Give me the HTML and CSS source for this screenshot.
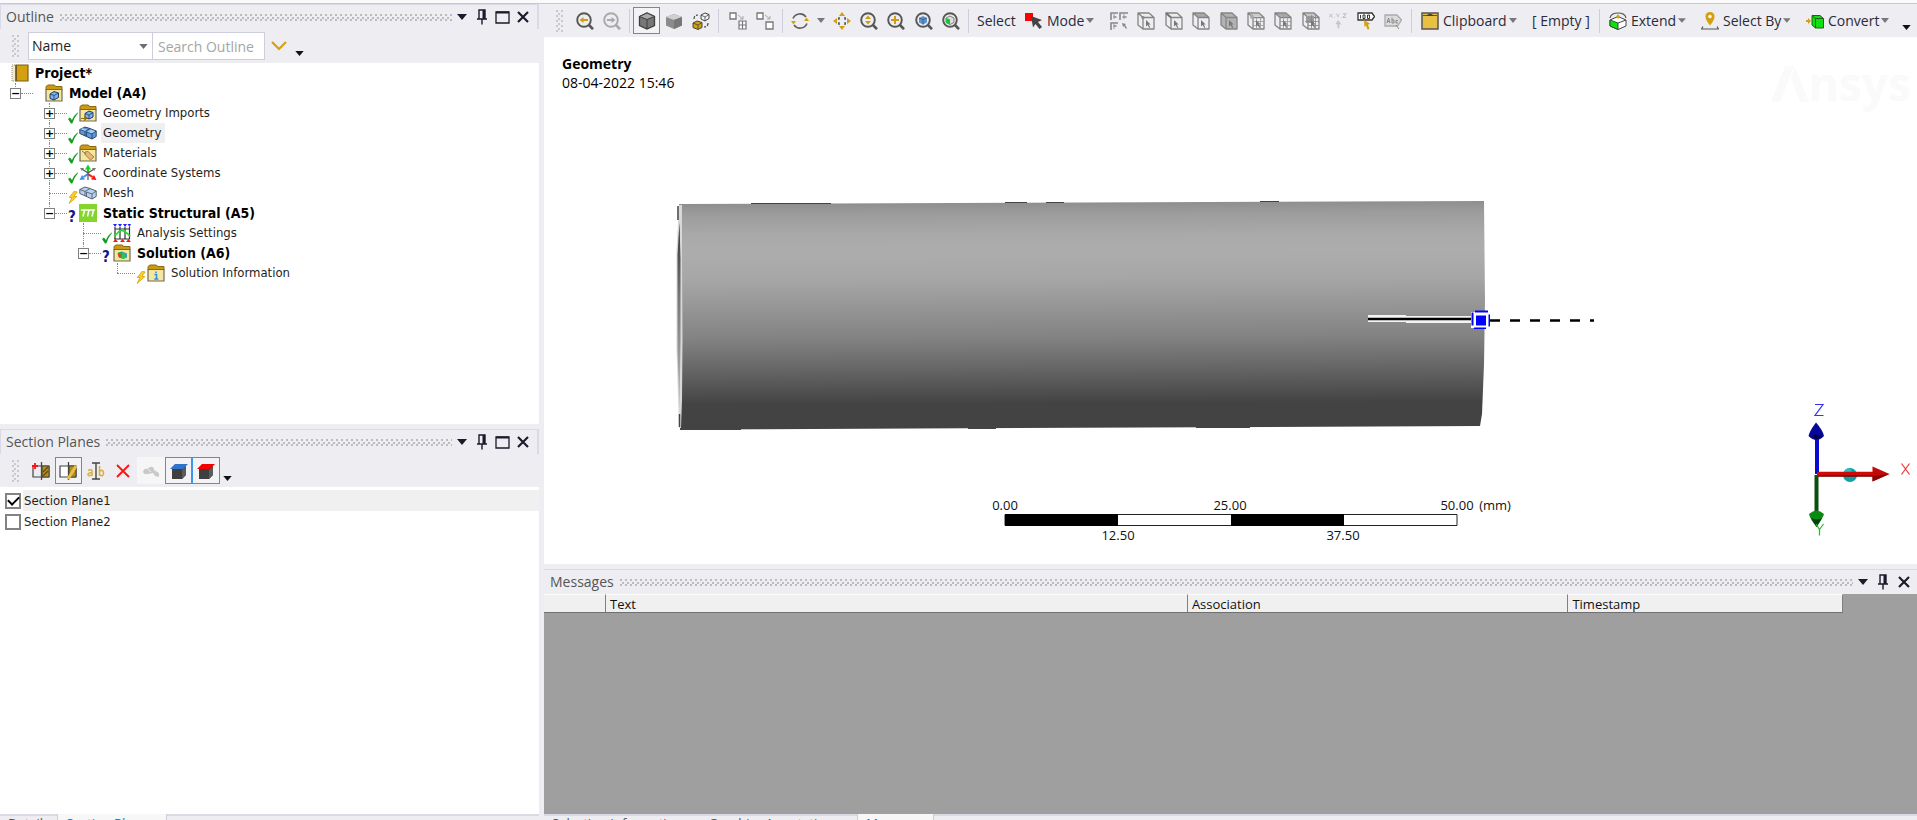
FILE: index.html
```html
<!DOCTYPE html>
<html lang="en">
<head>
<meta charset="utf-8">
<title>Mechanical - Geometry</title>
<link rel="stylesheet" href="styles.css">
</head>
<body>
<svg class="sprite" aria-hidden="true">
  <defs>
    <symbol id="i-caret" viewBox="0 0 10 6"><path d="M0 0h10L5 6z" fill="currentColor"/></symbol>
    <symbol id="i-pin" viewBox="0 0 10 16"><path d="M2 1h6v9H2zM0 10h10M5 10v5.500" fill="none" stroke="currentColor" stroke-width="1.400"/><path d="M5.500 1H8v9H5.500z" fill="currentColor"/></symbol>
    <symbol id="i-max" viewBox="0 0 15 13"><path d="M1 1h13v11H1z" fill="none" stroke="currentColor" stroke-width="1.300"/><path d="M1 1.500h13" stroke="currentColor" stroke-width="2"/></symbol>
    <symbol id="i-close" viewBox="0 0 12 12"><path d="M1 1l10 10M11 1L1 11" stroke="currentColor" stroke-width="2.200"/></symbol>
    <symbol id="i-check" viewBox="0 0 10 12"><path d="M0 7.500L2 6l2 2.500Q6 3.500 9.500 1l.5.5Q6.500 5.500 4.300 12H3z" fill="#12a01c"/></symbol>
    <symbol id="i-bolt" viewBox="0 0 10 14"><path d="M6 .5L1 7h3L.800 13.500 9.200 6H5.800L9.500 1z" fill="#ffd21f" stroke="#d09a10" stroke-width=".8"/></symbol>
    <symbol id="i-folder" viewBox="0 0 18 18"><path d="M1 4.500V2.500L3 1h6l2 1.500h6v3H1z" fill="#cc9a10" stroke="#8a6a14" stroke-width="1"/><path d="M1 5.500h16V17H1z" fill="#f6e7a0" stroke="#6f6a55" stroke-width="1.200"/></symbol>
    <symbol id="i-project" viewBox="0 0 18 18"><path d="M5 1h12v16H5z" fill="#d3a010" stroke="#7b6118" stroke-width="1.200"/><path d="M1 1h4v16H1z" fill="#f3ead0" stroke="#9a917a" stroke-dasharray="1 1"/><path d="M5 1v16" stroke="#5d4c1a" stroke-width="1.500"/></symbol>
    <symbol id="i-model" viewBox="0 0 18 18"><use href="#i-folder"/><path d="M5 10l4-2.500 4.500 1.500v4.500L9 16l-4-1.500z" fill="#7fb0ea" stroke="#1d3e68"/><path d="M5 10l4 1.500 4.500-2.500M9 11.500V16" fill="none" stroke="#1d3e68" stroke-width=".8"/></symbol>
    <symbol id="i-imports" viewBox="0 0 18 18"><use href="#i-folder"/><path d="M6 9.500L10 7l4 1.500V13l-4 2-4-1.500z" fill="#7fb0ea" stroke="#1d3e68"/><path d="M6 9.500l4 1.500 4-2.500M10 11v4" fill="none" stroke="#1d3e68" stroke-width=".8"/><path d="M2 14.500h5M5 12.500l2.500 2L5 16.500" fill="none" stroke="#9a6b00" stroke-width="1.200"/></symbol>
    <symbol id="i-geometry" viewBox="0 0 18 18"><path d="M.8 5.500L6 3l5 1.500L17.200 7v5.500L13 15 .8 9.500z" fill="#5b9be0" stroke="#2b4466"/><path d="M.8 5.500L6 8l2.500-2.200L3.500 4.200zM8 8l4.500 2L17 7.500 12 5.500z" fill="#a9cbf0"/><path d="M.8 5.500L6 7.500 11 4.500M6 7.500v4.200M7.500 8l5.500 2 4.200-3M13 10v5M7.500 8v4.500" fill="none" stroke="#2b4466" stroke-width=".9"/></symbol>
    <symbol id="i-mesh" viewBox="0 0 18 18"><path d="M.8 5.500L6 3l5 1.500L17.200 7v5.500L13 15 .8 9.500z" fill="#b8d2f0" stroke="#56616e"/><path d="M.8 5.500L6 7.500 11 4.500M6 7.500v4.200M7.500 8l5.500 2 4.200-3M13 10v5M7.500 8v4.500" fill="none" stroke="#56616e" stroke-width=".9"/></symbol>
    <symbol id="i-materials" viewBox="0 0 18 18"><use href="#i-folder"/><path d="M6 8l3-.5 6 5.500-3.500 3L6 10.500z" fill="#e9b878" stroke="#a37432" stroke-width=".9"/><path d="M3 7l4 3" stroke="#777"/></symbol>
    <symbol id="i-coords" viewBox="0 0 18 18"><path d="M9 9V4" stroke="#17d020" stroke-width="2"/><path d="M6 5.500L9 .5l3 5z" fill="#17d020"/><path d="M9 10l4.500 3" stroke="#f11" stroke-width="2"/><path d="M12 15.500l5.500.5-2.500-5z" fill="#f11"/><path d="M9 10l-4.500 3" stroke="#3f8df0" stroke-width="2"/><path d="M6 15.500L.5 16 3 11z" fill="#3f8df0"/><path d="M9 9L3 5M9 9l6-4M9 9v7" stroke="#555" stroke-width="1.200"/><path d="M1 4l4 0-2 3zM17 4h-4l2 3z" fill="#777"/></symbol>
    <symbol id="i-static" viewBox="0 0 18 18"><path d="M0 0h18v18H0z" fill="#84d52c"/><path d="M2 6h14M5.500 6L4 12.500M10 6l-1.500 6.500M14.500 6L13 12.500" stroke="#fff" stroke-width="1.500"/></symbol>
    <symbol id="i-analysis" viewBox="0 0 18 18"><path d="M2 3v12M7 3v12M12 3v12M16.500 3v12M2 5h15M1 15h16" stroke="#333" stroke-width="1.200"/><path d="M1 12q2-1 4-3.500T9 6.500t4 2 4 3.500" fill="none" stroke="#20df30" stroke-width="1.800"/><path d="M0 0h4L2 3zM5 0h4L7 3zM10 0h4l-2 3zM14.500 0H18l-1.500 3z" fill="#22f"/><path d="M0 18h5l-2.500-3zM7 18h5l-2.500-3zM13 18h5l-2.500-3z" fill="#f11"/></symbol>
    <symbol id="i-solution" viewBox="0 0 18 18"><use href="#i-folder"/><path d="M5 8.500l4-1v7l-3-1z" fill="#18b63c"/><path d="M4.500 9l3 1v4l-2-1z" fill="#e33a20"/><path d="M9 7.500l5 2v4l-5 1.500z" fill="#2f9bd8"/><path d="M9 8.500l3 2v4l-3 .5z" fill="#36c63c"/></symbol>
    <symbol id="i-solinfo" viewBox="0 0 18 18"><use href="#i-folder"/><path d="M9 7.500v1.500M7.500 10.500H9.500V15M7.300 15h4" fill="none" stroke="#2f8ae0" stroke-width="1.500"/></symbol>

    <symbol id="i-lens" viewBox="0 0 18 18"><circle cx="8" cy="8" r="6.800" fill="none" stroke="currentColor" stroke-width="1.900"/><path d="M12.500 12.500L17 17.200" stroke="currentColor" stroke-width="2.600"/></symbol>
    <symbol id="i-zback" viewBox="0 0 18 18"><use href="#i-lens"/><path d="M3.500 8L7.500 5v2H12v2H7.500v2z" fill="#cf9d12"/></symbol>
    <symbol id="i-zfwd" viewBox="0 0 18 18"><use href="#i-lens"/><path d="M12.500 8L8.500 5v2H4v2h4.500v2z" fill="currentColor"/></symbol>
    <symbol id="i-zoom" viewBox="0 0 18 18"><use href="#i-lens"/><path d="M8 3.500l3 3.500H5zM8 12.500l3-3.500H5z" fill="#cf9d12"/></symbol>
    <symbol id="i-zbox" viewBox="0 0 18 18"><use href="#i-lens"/><path d="M7 4h2v3h3v2H9v3H7V9H4V7h3z" fill="#cf9d12"/></symbol>
    <symbol id="i-zfit" viewBox="0 0 18 18"><use href="#i-lens"/><path d="M4 6l4-2 4 2v4.500L8 12.500l-4-2z" fill="#5f93cf"/><path d="M4 6l4 1.500L12 6M8 7.500v5" fill="none" stroke="#2f4d73" stroke-width=".7"/></symbol>
    <symbol id="i-zsel" viewBox="0 0 18 18"><use href="#i-lens"/><path d="M4 6l4-2 4 2v4.500L8 12.500l-4-2z" fill="#ddd" stroke="#555" stroke-width=".7"/><path d="M4 6l4 1.500v5l-4-2z" fill="#17c832"/></symbol>
    <symbol id="i-cubeedge" viewBox="0 0 18 18"><path d="M1.500 4.500L9 1l7.500 3.500v9L9 17l-7.500-3.500z" fill="#777" stroke="#3f3f3f" stroke-width="1.300"/><path d="M1.500 4.500L9 1l7.500 3.500L9 7.500z" fill="#aaa" stroke="#3f3f3f"/><path d="M9 7.500V17" stroke="#3f3f3f"/></symbol>
    <symbol id="i-cube" viewBox="0 0 18 18"><path d="M1 5l8-3 8 3v8.500L9 17l-8-3.500z" fill="#8b8b8b"/><path d="M1 5l8-3 8 3-8 3z" fill="#cfcfcf"/><path d="M9 8l8-3v8.500L9 17z" fill="#777"/></symbol>
    <symbol id="i-swap" viewBox="0 0 18 18"><path d="M9 3l4-2 4 1.500v4L13 9 9 7z" fill="#f4f4f4" stroke="#444"/><path d="M9 3l4 2 4-2.500M13 5v4" fill="none" stroke="#444" stroke-width=".8"/><path d="M1 11l4-2 5 1.500v5L6 17.500l-5-2z" fill="#d3a010" stroke="#444"/><path d="M1 11l5 2 4-2.500M6 13v4" fill="none" stroke="#444" stroke-width=".8"/><path d="M2 7q0-4 4-4M16 11q0 4-4 4" fill="none" stroke="#444" stroke-width="1.200" stroke-dasharray="3 1.500"/></symbol>
    <symbol id="i-expand1" viewBox="0 0 18 18"><path d="M1 1h6v6H1z" fill="#fff" stroke="#777" stroke-width="1.300"/><path d="M10 9h7v8h-7zM13.500 9v8M10 13h7" fill="#fff" stroke="#777" stroke-width="1.200"/><path d="M9 3l5 4M14 4v3h-3" fill="none" stroke="#aaa"/></symbol>
    <symbol id="i-expand2" viewBox="0 0 18 18"><path d="M1 1h6v6H1z" fill="#fff" stroke="#777" stroke-width="1.300"/><path d="M10 10h7v7h-7z" fill="#fff" stroke="#777" stroke-width="1.300"/><path d="M9 3l5 4M14 4v3h-3" fill="none" stroke="#aaa"/></symbol>
    <symbol id="i-rotate" viewBox="0 0 18 18"><path d="M2 6.500a7.500 7.500 0 0 1 13-1.500M16 11.500A7.500 7.500 0 0 1 3 13" fill="none" stroke="#606060" stroke-width="1.600"/><path d="M0 9l5 0-2.500 3.500zM18 9h-5l2.500-3.500z" fill="#d3a010"/></symbol>
    <symbol id="i-pan" viewBox="0 0 18 18"><path d="M9 0l3 4H6zM9 18l3-4H6zM0 9l4-3v6zM18 9l-4-3v6z" fill="#d3a010"/><path d="M6 5v2H5M12 5v2h1M6 13v-2H5M12 13v-2h1" fill="none" stroke="#555" stroke-width="1.500"/></symbol>
    <symbol id="i-selmode" viewBox="0 0 18 18"><path d="M0 1h8v8H0z" fill="#fe0000"/><path d="M6 4l11 4-4 2 4 5-2.500 2-4-5-2.500 3.500z" fill="#454545"/></symbol>
    <symbol id="i-arrow" viewBox="0 0 18 18"><path d="M9 8v6.500l1.600-1.500 1.700 3 1-.7-1.700-2.700h2.100z" fill="#777"/></symbol>
    <symbol id="i-filter" viewBox="0 0 18 18"><path d="M1 8V1h7M3.500 5h3M10 8V1h8M12.500 5h4M1 18v-7h7M3.500 14h3" fill="none" stroke="#888" stroke-width="1.600"/><path d="M4 2v5M14 2v5M4 12v5" stroke="#999"/><path d="M12 11l4 1-1 1 2 3-1 1-2-3-1 1z" fill="#888"/></symbol>
    <symbol id="i-box" viewBox="0 0 18 18"><path d="M1 1h11l5 4.500V17H6l-5-4zM6 5.500h11M6 5.500V17M1 1l5 4.500" fill="none" stroke="#858585" stroke-width="1.300" stroke-linejoin="round"/></symbol>
    <symbol id="i-vertex" viewBox="0 0 18 18"><use href="#i-box"/><use href="#i-arrow"/><circle cx="6" cy="5.500" r="1.600" fill="#888"/></symbol>
    <symbol id="i-edge" viewBox="0 0 18 18"><use href="#i-box"/><use href="#i-arrow"/><path d="M1 1l5 4.500" stroke="#777" stroke-width="2"/></symbol>
    <symbol id="i-face" viewBox="0 0 18 18"><path d="M1 1h11l5 4.500H6z" fill="#a9a9a9"/><use href="#i-box"/><use href="#i-arrow"/></symbol>
    <symbol id="i-body" viewBox="0 0 18 18"><path d="M1 1h11l5 4.500V17H6l-5-4z" fill="#b2b2b2"/><use href="#i-box"/><use href="#i-arrow"/></symbol>
    <symbol id="i-node" viewBox="0 0 18 18"><use href="#i-box"/><path d="M9.500 5.500V17M13.500 5.500V17M6 9.500h11M6 13.500h11M5 1v4M3.500 3h11" stroke="#999" stroke-width=".8"/><circle cx="5" cy="5" r="2" fill="#aaa"/><use href="#i-arrow"/></symbol>
    <symbol id="i-elface" viewBox="0 0 18 18"><path d="M1 1h11l5 4.500H6z" fill="#b5b5b5"/><use href="#i-box"/><path d="M9.500 1v16M13.500 3v14M6 9.500h11M6 13.500h11M3.500 3h11" stroke="#999" stroke-width=".8"/><use href="#i-arrow"/></symbol>
    <symbol id="i-element" viewBox="0 0 18 18"><use href="#i-box"/><path d="M4 4h8v7H4z" fill="#999"/><path d="M9.500 3v14M13.500 3v14M3 9.500h14M6 13.500h11M3.500 3h11" stroke="#888" stroke-width=".8"/><use href="#i-arrow"/></symbol>
    <symbol id="i-xyz" viewBox="0 0 20 18"><path d="M0 1l4 4M4 1L0 5M8 1l2 2 2-2M10 3v2M15.500 1H19l-3.500 4H19M6 5h.5M13.500 5h.5" fill="none" stroke="#b4b4b8"/><path d="M10 8l4 5-2.500-.5V17h-2v-4.500L7 13z" fill="#c6c6ca"/></symbol>
    <symbol id="i-probe" viewBox="0 0 18 18"><path d="M1 1h14l2.500 3.500L15 8H1z" fill="#fff" stroke="#333" stroke-width="1.300"/><path d="M3.500 3v3.500M6 3h2v3.500H6zM10.500 3h2v3.500h-2z" fill="none" stroke="#333"/><path d="M7 8l6.500 4-2.500.5 1.500 4.500-2 .5-1.500-4-1.500 1.500z" fill="#d3a010"/></symbol>
    <symbol id="i-abc" viewBox="0 0 18 18"><path d="M1 3h12l4.500 5-4 6H1z" fill="#dcdcdc" stroke="#aaa" stroke-width="1.300"/><path d="M3 11l1.500-5L6 11M3.500 9.500h2M8 5.500V11h2V8H8M14 8.500h-2V11h2M12 13l3 4" fill="none" stroke="#888"/></symbol>
    <symbol id="i-clip" viewBox="0 0 18 18"><path d="M1 1h16v16H1z" fill="#e8c044" stroke="#555" stroke-width="1.500"/><path d="M2 3.500h14" stroke="#555"/><path d="M5 4q4-5 8 0z" fill="#444"/></symbol>
    <symbol id="i-extend" viewBox="0 0 18 18"><path d="M1 8l8-3.500L17 8v6l-8 3.500L1 14z" fill="#fff" stroke="#444"/><path d="M1 8l8 3v6.500L1 14z" fill="#10e010" stroke="#2a5a2a"/><path d="M9 11l8-3" stroke="#444"/><path d="M1 6Q2 1 9 1t8 5" fill="none" stroke="#555" stroke-width="1.200"/><path d="M9 2l1.800 2.500L9 7 7.200 4.500z" fill="#d3a010"/></symbol>
    <symbol id="i-selby" viewBox="0 0 18 18"><path d="M9 0q4.500 0 4.500 4.500Q13.500 8 9 13.500 4.500 8 4.500 4.500 4.500 0 9 0z" fill="#d3a010"/><circle cx="9" cy="4.500" r="1.700" fill="#fff"/><path d="M2 14.500L.5 17h17L16 14.500" fill="none" stroke="#555" stroke-width="1.200"/></symbol>
    <symbol id="i-convert" viewBox="0 0 18 18"><path d="M6 3.500h8l3.500 3V16H9.500L6 13z" fill="#10e010" stroke="#245a24"/><path d="M6 3.500l3.500 3H17.500M9.500 6.500V16" fill="none" stroke="#245a24"/><path d="M0 8h2V6l3 3-3 3v-2H0z" fill="#d3a010"/></symbol>

    <symbol id="i-newplane" viewBox="0 0 18 18"><path d="M1 4h16v11H1z" fill="#ececf0" stroke="#444" stroke-width="1.200"/><path d="M10 4h7v11h-7z" fill="#b88d14" stroke="#444"/><path d="M11 10l5-5M11 14l5-5" stroke="#5d4a12" stroke-width="1.300"/><path d="M9.500 0v18" stroke="#444" stroke-width="1.300"/><path d="M3 1v6M0 4h6" stroke="#f11" stroke-width="1.800"/></symbol>
    <symbol id="i-editplane" viewBox="0 0 18 18"><path d="M1 4h16v11H1z" fill="#fff" stroke="#444" stroke-width="1.200"/><path d="M10 4h7v11h-7z" fill="#b88d14" stroke="#444"/><path d="M9.500 0v18" stroke="#444" stroke-width="1.300"/><path d="M17 4l-8 13" stroke="#e8c044" stroke-width="3"/></symbol>
    <symbol id="i-rename" viewBox="0 0 18 18"><path d="M1 8.500q4-2 4 1V14M5 11q-4-.5-4 1.500t4 .5M12.500 4v10M12.500 9q4-2 4 2t-4 2" fill="none" stroke="#dcb040" stroke-width="1.600"/><path d="M5 1h8M5 17h8M9 1v16" stroke="#444" stroke-width="1.400"/></symbol>
    <symbol id="i-delete" viewBox="0 0 18 18"><path d="M3 3l12 12M15 3L3 15" stroke="#fb1515" stroke-width="1.900"/></symbol>
    <symbol id="i-ghost" viewBox="0 0 18 18"><path d="M1 10q1-4 4-3l3-2q4-1 4 3l5 3v4l-4-1-2-3-5 1q-4 1-5-2z" fill="#c9c9c9"/><path d="M6 7l3 3" stroke="#eee"/></symbol>
    <symbol id="i-capblue" viewBox="0 0 18 18"><path d="M2 6h10l4-2v9l-4 4H2z" fill="#3f3f3f"/><path d="M12 8l4-3v8l-4 4z" fill="#5c5c5c"/><path d="M5 2h13l-5 5H0z" fill="#2f74cc"/></symbol>
    <symbol id="i-capred" viewBox="0 0 18 18"><path d="M2 6h10l4-2v9l-4 4H2z" fill="#3f3f3f"/><path d="M12 8l4-3v8l-4 4z" fill="#5c5c5c"/><path d="M5 2h13l-5 5H0z" fill="#f60000"/></symbol>
  </defs>
</svg>

<div class="app">
  <div class="column side">
    <section class="panel outline">
      <header class="panel-head framed">
        <h2>Outline</h2><span class="dots"></span>
        <button aria-label="Menu"><svg class="w10"><use href="#i-caret"/></svg></button>
        <button aria-label="Pin"><svg class="w10 tall"><use href="#i-pin"/></svg></button>
        <button aria-label="Maximize"><svg class="w15"><use href="#i-max"/></svg></button>
        <button aria-label="Close"><svg class="w12"><use href="#i-close"/></svg></button>
      </header>
      <div class="search-bar">
        <span class="grip"></span>
        <span class="select-wrap"><select aria-label="Search by"><option>Name</option></select><svg><use href="#i-caret"/></svg></span>
        <input type="text" aria-label="Search Outline" placeholder="Search Outline">
        <button class="chevron" aria-label="Expand"><svg viewBox="0 0 16 10"><path d="M1 1l7 7 7-7" fill="none" stroke="#d3a010" stroke-width="2.200"/></svg></button>
        <button class="more" aria-label="More"><svg><use href="#i-caret"/></svg></button>
      </div>
      <div class="panel-body">
        <ul class="tree">
          <li>
            <div class="row strong"><svg class="icon"><use href="#i-project"/></svg><span class="label">Project*</span></div>
            <ul>
              <li>
                <div class="row strong"><span class="twig"><button class="toggle" aria-label="Collapse">−</button></span><svg class="icon"><use href="#i-model"/></svg><span class="label">Model (A4)</span></div>
                <ul>
                  <li><div class="row"><span class="twig"><button class="toggle" aria-label="Expand">+</button><svg class="mark"><use href="#i-check"/></svg></span><svg class="icon"><use href="#i-imports"/></svg><span class="label">Geometry Imports</span></div></li>
                  <li><div class="row"><span class="twig"><button class="toggle" aria-label="Expand">+</button><svg class="mark"><use href="#i-check"/></svg></span><svg class="icon"><use href="#i-geometry"/></svg><span class="label current">Geometry</span></div></li>
                  <li><div class="row"><span class="twig"><button class="toggle" aria-label="Expand">+</button><svg class="mark"><use href="#i-check"/></svg></span><svg class="icon"><use href="#i-materials"/></svg><span class="label">Materials</span></div></li>
                  <li><div class="row"><span class="twig"><button class="toggle" aria-label="Expand">+</button><svg class="mark"><use href="#i-check"/></svg></span><svg class="icon"><use href="#i-coords"/></svg><span class="label">Coordinate Systems</span></div></li>
                  <li><div class="row"><span class="twig leaf"><svg class="mark"><use href="#i-bolt"/></svg></span><svg class="icon"><use href="#i-mesh"/></svg><span class="label">Mesh</span></div></li>
                  <li>
                    <div class="row strong"><span class="twig"><button class="toggle" aria-label="Collapse">−</button><b class="mark">?</b></span><svg class="icon"><use href="#i-static"/></svg><span class="label">Static Structural (A5)</span></div>
                    <ul>
                      <li><div class="row"><span class="twig leaf"><svg class="mark"><use href="#i-check"/></svg></span><svg class="icon"><use href="#i-analysis"/></svg><span class="label">Analysis Settings</span></div></li>
                      <li>
                        <div class="row strong"><span class="twig"><button class="toggle" aria-label="Collapse">−</button><b class="mark">?</b></span><svg class="icon"><use href="#i-solution"/></svg><span class="label">Solution (A6)</span></div>
                        <ul>
                          <li><div class="row"><span class="twig leaf"><svg class="mark"><use href="#i-bolt"/></svg></span><svg class="icon"><use href="#i-solinfo"/></svg><span class="label">Solution Information</span></div></li>
                        </ul>
                      </li>
                    </ul>
                  </li>
                </ul>
              </li>
            </ul>
          </li>
        </ul>
      </div>
    </section>

    <section class="panel planes">
      <header class="panel-head framed">
        <h2>Section Planes</h2><span class="dots"></span>
        <button aria-label="Menu"><svg class="w10"><use href="#i-caret"/></svg></button>
        <button aria-label="Pin"><svg class="w10 tall"><use href="#i-pin"/></svg></button>
        <button aria-label="Maximize"><svg class="w15"><use href="#i-max"/></svg></button>
        <button aria-label="Close"><svg class="w12"><use href="#i-close"/></svg></button>
      </header>
      <div class="plane-bar">
        <span class="grip"></span>
        <div class="tools">
          <button aria-label="New section plane"><svg><use href="#i-newplane"/></svg></button>
          <button class="on" aria-label="Edit section plane"><svg><use href="#i-editplane"/></svg></button>
          <button aria-label="Rename"><svg><use href="#i-rename"/></svg></button>
          <button aria-label="Delete"><svg><use href="#i-delete"/></svg></button>
          <button class="pale" aria-label="Show whole elements"><svg><use href="#i-ghost"/></svg></button>
          <button class="on" aria-label="Show capping faces"><svg><use href="#i-capblue"/></svg></button>
          <button class="on" aria-label="Show capping by body"><svg><use href="#i-capred"/></svg></button>
        </div>
        <button class="more" aria-label="More"><svg><use href="#i-caret"/></svg></button>
      </div>
      <div class="panel-body plane-list">
        <label class="plane"><input type="checkbox" checked><span class="active">Section Plane1</span></label>
        <label class="plane"><input type="checkbox"><span>Section Plane2</span></label>
      </div>
      <nav class="tabs">
        <button>Details</button>
        <button class="active">Section Planes</button>
      </nav>
    </section>
  </div>

  <main class="column work">
    <div class="toolbar">
      <span class="grip"></span>
      <div class="tools two">
        <button aria-label="Previous view"><svg><use href="#i-zback"/></svg></button>
        <button class="dim" aria-label="Next view"><svg><use href="#i-zfwd"/></svg></button>
      </div>
      <span class="rule"></span>
      <div class="tools three">
        <button class="on" aria-label="Shaded exterior and edges"><svg><use href="#i-cubeedge"/></svg></button>
        <button aria-label="Shaded exterior"><svg><use href="#i-cube"/></svg></button>
        <button aria-label="Swap display"><svg><use href="#i-swap"/></svg></button>
      </div>
      <span class="rule"></span>
      <div class="tools two">
        <button aria-label="Expand parts"><svg><use href="#i-expand1"/></svg></button>
        <button aria-label="Collapse parts"><svg><use href="#i-expand2"/></svg></button>
      </div>
      <span class="rule"></span>
      <button class="spin" aria-label="Rotate"><svg class="glyph"><use href="#i-rotate"/></svg><svg class="caret"><use href="#i-caret"/></svg></button>
      <div class="tools five">
        <button aria-label="Pan"><svg><use href="#i-pan"/></svg></button>
        <button aria-label="Zoom"><svg><use href="#i-zoom"/></svg></button>
        <button aria-label="Box zoom"><svg><use href="#i-zbox"/></svg></button>
        <button aria-label="Zoom to fit"><svg><use href="#i-zfit"/></svg></button>
        <button aria-label="Zoom to selection"><svg><use href="#i-zsel"/></svg></button>
      </div>
      <span class="rule"></span>
      <span class="caption">Select</span>
      <button class="menu mode"><svg class="glyph"><use href="#i-selmode"/></svg>Mode<svg class="caret"><use href="#i-caret"/></svg></button>
      <div class="tools eleven">
        <button aria-label="Selection filter"><svg><use href="#i-filter"/></svg></button>
        <button aria-label="Vertex"><svg><use href="#i-vertex"/></svg></button>
        <button aria-label="Edge"><svg><use href="#i-edge"/></svg></button>
        <button aria-label="Face"><svg><use href="#i-face"/></svg></button>
        <button aria-label="Body"><svg><use href="#i-body"/></svg></button>
        <button aria-label="Node"><svg><use href="#i-node"/></svg></button>
        <button aria-label="Element face"><svg><use href="#i-elface"/></svg></button>
        <button aria-label="Element"><svg><use href="#i-element"/></svg></button>
        <button aria-label="Coordinates"><svg><use href="#i-xyz"/></svg></button>
        <button aria-label="Probe"><svg><use href="#i-probe"/></svg></button>
        <button aria-label="Label"><svg><use href="#i-abc"/></svg></button>
      </div>
      <span class="rule"></span>
      <button class="menu clip"><svg class="glyph"><use href="#i-clip"/></svg>Clipboard<svg class="caret"><use href="#i-caret"/></svg></button>
      <span class="empty">[ Empty ]</span>
      <span class="rule"></span>
      <button class="menu extend"><svg class="glyph"><use href="#i-extend"/></svg>Extend<svg class="caret"><use href="#i-caret"/></svg></button>
      <button class="menu selby"><svg class="glyph"><use href="#i-selby"/></svg>Select By<svg class="caret"><use href="#i-caret"/></svg></button>
      <button class="menu convert"><svg class="glyph"><use href="#i-convert"/></svg>Convert<svg class="caret"><use href="#i-caret"/></svg></button>
      <button class="more" aria-label="More"><svg><use href="#i-caret"/></svg></button>
    </div>

    <div class="viewport">
      <svg class="scene" viewBox="544 37 1373 527" role="img" aria-label="Cylinder with section plane">
        <defs>
          <linearGradient id="steel" gradientUnits="userSpaceOnUse" x1="1080" y1="202" x2="1081" y2="428">
            <stop offset="0" stop-color="#8e8e8e"/><stop offset=".05" stop-color="#9c9c9c"/><stop offset=".14" stop-color="#a9a9a9"/><stop offset=".22" stop-color="#adadad"/><stop offset=".34" stop-color="#a6a6a6"/><stop offset=".46" stop-color="#969696"/><stop offset=".6" stop-color="#828282"/><stop offset=".72" stop-color="#696969"/><stop offset=".82" stop-color="#535353"/><stop offset=".89" stop-color="#434343"/><stop offset="1" stop-color="#434343"/>
          </linearGradient>
          <linearGradient id="rim" x1="0" y1="0" x2="0" y2="1"><stop offset="0" stop-color="#333"/><stop offset=".4" stop-color="#777"/><stop offset="1" stop-color="#bbb"/></linearGradient>
        </defs>
        <path d="M679 204L1484 201L1485 300L1484 364L1482 414L1480 426L680 429.500L677 320z" fill="url(#steel)"/>
        <path d="M679 205L682 205L682 260L682.500 340L682 400L681 428L679 428L676.500 350L676.500 250z" fill="#d8d8d8"/>
        <path d="M679.500 222L680.500 260V340L679.500 410L677.500 350V255z" fill="url(#rim)"/>
        <path d="M678 206v14M679.500 414v13" stroke="#444" stroke-width="1.500"/>
        <path d="M751 203.500h80M1005 202.500h22M1046 202.500h18M1260 201.500h19M680 429.500h61M968 428.500h28M1196 427.500h54" stroke="#444"/>
        <path d="M1368 315h38v1h66v7h-66v-1h-38z" fill="#f4f4f4"/>
        <path d="M1368 319h104" stroke="#000" stroke-width="2.500"/>
        <path d="M1490 320.500h10M1510 320.500h10M1530 320.500h10M1550 320.500h10M1570 320.500h10M1590 320.500h4" stroke="#000" stroke-width="2.500"/>
        <path d="M1471 312h18v16h-18z" fill="#fff"/>
        <path d="M1475 310.500h13v2h-13zM1474 327.500h12v1.500h-12zM1471.500 312.500h2v13h-2zM1488.500 314.500h1.500v12h-1.500zM1476 315.500h10v10h-10z" fill="#00f"/>

        <path d="M1005 514.500h452v11h-452z" fill="#fff" stroke="#222"/>
        <path d="M1005 514h113v12h-113zM1231 514h113v12h-113z"/>
        <g class="scale-text">
          <text x="1005" y="510">0.00</text><text x="1230" y="510">25.00</text><text x="1457" y="510">50.00</text><text x="1495" y="510">(mm)</text>
          <text x="1118" y="540">12.50</text><text x="1343" y="540">37.50</text>
        </g>

        <circle cx="1850" cy="475" r="7" fill="#12a0a4"/><circle cx="1848" cy="472" r="3.500" fill="#25c4c4"/>
        <path d="M1816.500 475v42" stroke="#0b4f10" stroke-width="4"/><path d="M1809 514q7.500-7 15 0-1 4-7.500 13-6.500-8-7.500-13z" fill="#0a8a10"/><path d="M1811 518q6 3 11 0l-5.500 9z" fill="#083f0c"/>
        <path d="M1817 474v-42" stroke="#0a0ad0" stroke-width="4"/><path d="M1808.500 436q1-5 7.500-13.500 7 8 8 13.500-7.500 8-15.500 0z" fill="#06069a"/><path d="M1812 437q4-5 9 0-4 4-9 0z" fill="#020240"/>
        <path d="M1817 474h56" stroke="#cc0a0a" stroke-width="4.500"/><path d="M1818 476h55" stroke="#7a0505" stroke-width="1.500"/><path d="M1872.500 466.500v15l17-7.500z" fill="#c40808"/><path d="M1872.500 476v5.500l17-7.500z" fill="#8a0505"/>
        <path d="M1815 404.500h8l-8 11h8.500" fill="none" stroke="#3333f4" stroke-width="1.200"/>
        <path d="M1901.500 463.500l8 11M1909.500 463.500l-8 11" stroke="#f43333" stroke-width="1.200"/>
        <path d="M1816 524l3.500 5.500 4-5.500M1819.500 529.500v6" fill="none" stroke="#22b822" stroke-width="1.200"/>
      </svg>
      <div class="stamp"><h1>Geometry</h1><p>08-04-2022 15:46</p></div>
      <div class="watermark"><svg viewBox="0 0 38 36"><path d="M0 36L14 0h9L9 36zM24 1l14 35H29L20 12z" fill="currentColor"/></svg><span>nsys</span></div>
    </div>

    <section class="panel messages">
      <header class="panel-head">
        <h2>Messages</h2><span class="dots"></span>
        <button aria-label="Menu"><svg class="w10"><use href="#i-caret"/></svg></button>
        <button aria-label="Pin"><svg class="w10 tall"><use href="#i-pin"/></svg></button>
        <button aria-label="Close"><svg class="w12"><use href="#i-close"/></svg></button>
      </header>
      <div class="message-area">
        <table>
          <colgroup><col class="c-mark"><col class="c-text"><col class="c-assoc"><col></colgroup>
          <thead><tr><th></th><th>Text</th><th>Association</th><th>Timestamp</th></tr></thead>
        </table>
      </div>
      <nav class="tabs">
        <button>Selection Information</button>
        <button>Graphics Annotations</button>
        <button class="active">Messages</button>
      </nav>
    </section>
  </main>
</div>
</body>
</html>
```

FILE: styles.css
```css
* { box-sizing: border-box; }

body {
  margin: 0;
  height: 100vh;
  overflow: hidden;
  background: #eeeef2;
  color: #1e1e1e;
  font: 13px/20px "Open Sans", "Noto Sans", sans-serif;
}

h1, h2, p, ul { margin: 0; padding: 0; }
button, input, select { font: inherit; color: inherit; }
button {
  display: flex;
  align-items: center;
  justify-content: center;
  padding: 0;
  border: 0;
  background: none;
  white-space: nowrap;
}
.sprite { position: absolute; width: 0; height: 0; }

/* The tab strips run past the lower edge of the window. */
.app {
  display: grid;
  grid-template-columns: 539fr 1373fr;
  column-gap: 5px;
  height: calc(100vh + 18px);
  border-top: 3px solid #fafafa;
  box-shadow: inset 0 1px #c9c9cc;
}
.column { display: flex; flex-direction: column; min-width: 0; padding-top: 1px; }
.panel { display: flex; flex-direction: column; min-height: 0; }
.panel-body { flex: 1; min-height: 0; overflow: hidden; background: #fff; }

.panel-head {
  display: flex;
  align-items: center;
  flex: none;
  height: 25px;
  padding: 0 4px 0 5px;
  border-top: 1px solid #d9dae6;
}
.panel-head.framed { border-right: 2px solid #d9dae6; border-left: 1px solid #d9dae6; }
.panel-head h2 { margin-right: 6px; color: #555; font-size: 14px; font-weight: 400; }
.panel-head button { width: 20px; height: 20px; color: #1b1b2b; }
.panel-head button:nth-last-child(2) { margin-right: 1px; }
.dots {
  flex: 1;
  height: 7px;
  background:
    radial-gradient(circle at 1px 1px, #bcbcc0 1px, transparent 1px) 0 0 / 5px 5px,
    radial-gradient(circle at 1px 1px, #bcbcc0 1px, transparent 1px) 2px 3px / 5px 5px;
}
.w10 { width: 10px; height: 6px; }
.w10.tall { height: 16px; }
.w12 { width: 12px; height: 12px; }
.w15 { width: 15px; height: 13px; }

.grip {
  flex: none;
  width: 7px;
  height: 22px;
  background:
    radial-gradient(circle at 1px 1px, #c8c8ce 1px, transparent 1px) 0 0 / 5px 5px,
    radial-gradient(circle at 1px 1px, #c8c8ce 1px, transparent 1px) 2px 3px / 5px 5px;
}
.more { align-self: flex-end; width: 14px; height: 18px; color: #111; }
.more svg { width: 9px; height: 5px; }

/* Outline */
.outline { flex: 420 420 420px; }
.search-bar { display: flex; align-items: center; flex: none; height: 34px; padding: 0 11px 0 12px; font-size: 14px; }
.select-wrap { position: relative; margin-left: 9px; }
.select-wrap svg { position: absolute; top: 12px; right: 5px; width: 9px; height: 5px; color: #6d6d75; }
.search-bar select {
  display: block;
  width: 125px;
  height: 28px;
  padding: 0 3px;
  border: 1px solid #cccedb;
  border-radius: 0;
  background: #fff;
  appearance: none;
}
.search-bar input { width: 112px; height: 28px; padding: 0 5px; border: 1px solid #cccedb; border-left: 0; outline: 0; }
.search-bar input::placeholder { color: #a5a5a5; opacity: 1; }
.chevron { width: 28px; height: 28px; }
.chevron svg { width: 16px; height: 10px; }
.search-bar .more { height: 20px; margin-left: -1px; }

.tree, .tree ul { list-style: none; }
.tree { padding-left: 11px; font: 13px/20px "DejaVu Sans Condensed", "Noto Sans", sans-serif; }
.tree li { position: relative; }
.tree ul li { padding-left: 34px; }
.tree ul li::before {
  content: "";
  position: absolute;
  top: 0;
  bottom: 0;
  left: 4px;
  border-left: 1px dotted #8a8a8a;
}
.tree ul li:last-child::before { bottom: auto; height: 10px; }
.row { display: flex; align-items: center; height: 20px; }
.row.strong { color: #000; font-size: 14px; font-weight: 700; }
.twig { position: relative; display: flex; align-items: center; width: 34px; height: 20px; margin-left: -34px; }
.twig::after {
  content: "";
  position: absolute;
  top: 10px;
  left: 10px;
  right: 12px;
  border-top: 1px dotted #8a8a8a;
}
.twig.leaf::after { left: 4px; }
.toggle {
  width: 11px;
  height: 11px;
  margin-left: -1px;
  border: 1px solid #808080;
  background: #fff;
  color: #000;
  font: 700 11px/9px "DejaVu Sans", sans-serif;
}
.mark { width: 10px; height: 13px; margin: 8px 1px 0 auto; color: #14148c; font: 700 15px/13px "DejaVu Sans Condensed", sans-serif; }
.icon { flex: none; width: 18px; height: 18px; }
.label { padding: 0 4px 0 5px; margin-left: 1px; white-space: nowrap; }
.label.current { margin-left: 4px; padding: 0 4px 0 2px; background: #efefef; }

/* Section planes */
.planes { flex: 414 414 414px; padding-top: 5px; }
.plane-bar { display: flex; align-items: center; flex: none; height: 33px; padding: 0 9px 0 12px; }
.tools { display: grid; grid-auto-flow: column; grid-auto-columns: 1fr; flex: none; }
.tools button { height: 27px; border: 1px solid transparent; }
.tools svg, .glyph { flex: none; width: 18px; height: 18px; color: #565656; }
.tools .on { border: 1px solid #3a96f0; background: #f3f3f6; }
.tools .pale { background: #f6f6f7; }
.tools .dim svg { color: #a9a9a9; }
.plane-bar .tools { width: 193px; margin-left: 8px; }
.plane-list { padding-top: 3px; font: 13px/21px "DejaVu Sans Condensed", "Noto Sans", sans-serif; }
.plane { display: flex; align-items: center; height: 21px; padding-left: 5px; }
.plane span { flex: 1; padding-left: 1px; margin-left: 2px; }
.plane .active { background: #f0f0f0; }
.plane input {
  width: 16px;
  height: 16px;
  margin: 0;
  border: 2px solid #838383;
  background: #fff;
  appearance: none;
}
.plane input:checked { display: grid; place-items: center; }
.plane input:checked::before {
  content: "";
  width: 9px;
  height: 5px;
  margin-bottom: 3px;
  border: solid #000;
  border-width: 0 0 2px 2px;
  rotate: -45deg;
}

.tabs {
  display: flex;
  flex: none;
  height: 24px;
  background: linear-gradient(#d9dae4 2px, #eeeef2 2px);
  color: #555;
}
.tabs button { align-items: flex-start; padding: 1px 8px 0; line-height: 16px; }
.tabs .active { border: 1px solid #cccedb; border-width: 0 1px; background: #f7f7f8; color: #0e7ec4; }
.side .tabs .active { padding: 1px 12px 0 8px; }
.work .tabs button { padding-right: 18px; }
.work .tabs .active { padding: 1px 8px 0; }

/* Graphics toolbar */
.toolbar { display: flex; align-items: center; flex: none; height: 33px; padding-left: 12px; font-size: 14px; color: #2a2a3a; }
.rule { flex: none; width: 1px; height: 24px; background: #cccedb; }
.toolbar .two { width: 55px; margin: 0 3px 0 5px; }
.toolbar .grip + .two { margin-left: 8px; }
.toolbar .three { width: 82px; margin: 0 3px; }
.toolbar .five { width: 137px; margin-right: 3px; }
.toolbar .eleven { width: 302px; margin-right: 4px; }
.toolbar .spin { gap: 8px; margin: 0 3px 0 8px; }
.caret { width: 8px; height: 5px; color: #77777f; }
.caption { width: 38px; margin: 0 10px 0 8px; }
.menu { flex: none; gap: 4px; justify-content: flex-start; }
.menu .caret { margin-left: -2px; }
.mode { width: 80px; }
.clip { width: 96px; margin-left: 9px; }
.empty { width: 60px; margin: 0 7px 0 15px; white-space: nowrap; }
.extend { width: 77px; margin-left: 9px; }
.selby { width: 90px; margin-left: 15px; }
.convert { width: 85px; margin-left: 15px; }
.toolbar .more { margin-left: 8px; flex: none; height: 20px; }

/* Viewport */
.viewport { position: relative; flex: 527 527 527px; min-height: 0; background: #fff; }
.scene { display: block; width: 100%; height: 100%; }
.scale-text { font-size: 13px; text-anchor: middle; fill: #111; }
.stamp { position: absolute; top: 17px; left: 18px; color: #000; font-size: 14px; line-height: 19px; }
.stamp h1 { font-size: 14px; line-height: 19px; }
.watermark { position: absolute; top: 22px; right: 6px; display: flex; align-items: flex-start; color: #fafafa; font: 700 46px/48px "Open Sans", sans-serif; }
.watermark svg { width: 38px; height: 36px; margin-top: 7px; }

/* Messages */
.messages { flex: 274 274 274px; padding-top: 5px; }
.messages .panel-head { padding: 0 3px 0 6px; }
.message-area { flex: 1; min-height: 0; background: #9f9f9f; }
.message-area table { width: 94.6%; table-layout: fixed; border-collapse: separate; border-spacing: 0; }
.c-mark { width: 62px; }
.c-text { width: 44.8%; }
.c-assoc { width: 29.3%; }
.message-area th {
  height: 19px;
  padding: 1px 4px 0;
  border-right: 1px solid #808080;
  border-bottom: 1px solid #707070;
  border-top: 1px solid #fbfbfb;
  background: #f0f0f0;
  color: #111;
  font-weight: 400;
  line-height: 16px;
  text-align: left;
}
```
